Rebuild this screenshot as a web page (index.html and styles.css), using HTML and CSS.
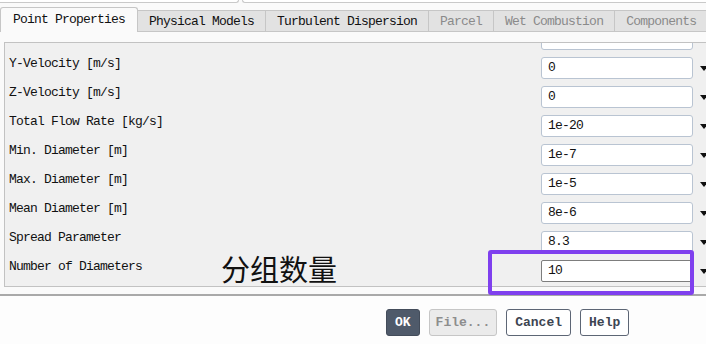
FILE: index.html
```html
<!DOCTYPE html>
<html lang="en">
<head>
    <meta charset="UTF-8">
    <meta name="viewport" content="width=device-width, initial-scale=1.0">
    <title>Point Properties</title>
    <link rel="stylesheet" href="styles.css">
</head>
<body>
    <div class="top-edge">
        <div class="edge-box edge-left"></div>
        <div class="edge-box edge-right"></div>
    </div>
    <div class="tabs">
        <div class="tab active">Point Properties</div>
        <div class="tab">Physical Models</div>
        <div class="tab">Turbulent Dispersion</div>
        <div class="tab off">Parcel</div>
        <div class="tab off">Wet Combustion</div>
        <div class="tab off">Components</div>
    </div>
    <div class="sheet">
        <div class="panel">
            <div class="rows">
                <!-- 上一行已滚出可视区，只露出输入框底边 -->
                <div class="row">
                    <span class="label"></span>
                    <span class="input"></span><span class="arrow"></span>
                </div>
                <div class="row">
                    <span class="label">Y-Velocity [m/s]</span>
                    <span class="input">0</span><span class="arrow"></span>
                </div>
                <div class="row">
                    <span class="label">Z-Velocity [m/s]</span>
                    <span class="input">0</span><span class="arrow"></span>
                </div>
                <div class="row">
                    <span class="label">Total Flow Rate [kg/s]</span>
                    <span class="input">1e-20</span><span class="arrow"></span>
                </div>
                <div class="row">
                    <span class="label">Min. Diameter [m]</span>
                    <span class="input">1e-7</span><span class="arrow"></span>
                </div>
                <div class="row">
                    <span class="label">Max. Diameter [m]</span>
                    <span class="input">1e-5</span><span class="arrow"></span>
                </div>
                <div class="row">
                    <span class="label">Mean Diameter [m]</span>
                    <span class="input">8e-6</span><span class="arrow"></span>
                </div>
                <div class="row">
                    <span class="label">Spread Parameter</span>
                    <span class="input">8.3</span><span class="arrow"></span>
                </div>
                <div class="row">
                    <span class="label">Number of Diameters</span>
                    <span class="input focus">10</span><span class="arrow"></span>
                </div>
            </div>
        </div>
    </div>
    <div class="actions">
        <button class="btn primary">OK</button>
        <button class="btn disabled">File...</button>
        <button class="btn">Cancel</button>
        <button class="btn">Help</button>
    </div>

    <!-- 标注 -->
    <div class="note">分组数量</div>
    <div class="mark"></div>
</body>
</html>
```

FILE: styles.css
```css
*{
    margin: 0;
    padding: 0;
    box-sizing: border-box;
}
body{
    width: 706px;
    height: 344px;
    overflow: hidden;
    position: relative;
    background-color: #fdfdfd;
    font-family: 'Liberation Mono', monospace;
    font-size: 13px;
    letter-spacing: -0.8px;
    color: #111;
}
.top-edge{
    display: flex;
    height: 7px;
    background-color: #fafafa;
}
.edge-box{
    height: 3px;
    background-color: #fff;
    border-bottom: 1px solid #c9c9c9;
}
.edge-left{
    width: 239px;
    border-right: 1px solid #c9c9c9;
    border-bottom-right-radius: 4px;
}
.edge-right{
    flex: 1;
    margin-left: 3px;
    border-left: 1px solid #c9c9c9;
    border-bottom-left-radius: 4px;
}
.tabs{
    display: flex;
    align-items: flex-end;
    height: 25px;
    background-color: #fafafa;
    border-bottom: 1px solid #c6c6c6;
}
.tab{
    flex-shrink: 0;
    height: 21px;
    line-height: 21px;
    padding: 0 11px;
    background-color: #e2e2e2;
    border-top: 1px solid #c6c6c6;
    border-right: 1px solid #c6c6c6;
    white-space: nowrap;
}
.tab.active{
    height: 25px;
    line-height: 24px;
    padding: 0 12px;
    margin-bottom: -1px;
    background-color: #fafafa;
    border-left: 1px solid #c6c6c6;
    border-top-left-radius: 3px;
    border-top-right-radius: 3px;
}
.tab.off{
    color: #8a8a8a;
}
.sheet{
    height: 264px;
    padding: 10px 0 0 4px;
    background-color: #fafafa;
    border-bottom: 2px solid #a9a9a9;
}
.panel{
    height: 245px;
    overflow: hidden;
    background-color: #f0f0f0;
    border: 1px solid #c2c2c2;
    border-right: none;
}
.rows{
    margin-top: -18px;
}
.row{
    display: flex;
    align-items: flex-start;
    height: 29px;
}
.label{
    width: 536px;
    flex-shrink: 0;
    padding: 2px 0 0 4px;
    line-height: 16px;
    white-space: nowrap;
}
.input{
    width: 152px;
    height: 22px;
    flex-shrink: 0;
    margin-top: 3px;
    padding-left: 6px;
    line-height: 20px;
    background-color: #fff;
    border: 1px solid #b9c4d2;
    border-radius: 3px;
}
.input.focus{
    border-color: #7d7d7d;
    border-radius: 2px;
}
.arrow{
    flex-shrink: 0;
    width: 0;
    height: 0;
    margin: 12px 0 0 7px;
    border-left: 4px solid transparent;
    border-right: 4px solid transparent;
    border-top: 5px solid #111;
}
.actions{
    display: flex;
    gap: 9px;
    padding: 13px 0 0 386px;
}
.btn{
    height: 27px;
    padding: 0 8px;
    font-family: 'Liberation Mono', monospace;
    font-size: 13px;
    font-weight: bold;
    letter-spacing: 0;
    color: #3d4552;
    background-color: #fff;
    border: 1px solid #5d6675;
    border-radius: 3px;
}
.btn.primary{
    color: #fff;
    background-color: #4f5a6a;
    border-color: #434c5a;
}
.btn.disabled{
    padding: 0 6px;
    color: #8d8d8d;
    background-color: #ebebeb;
    border-color: #c6c6c6;
}
.note{
    position: absolute;
    left: 221px;
    top: 253px;
    font-family: 'Noto Sans CJK SC', sans-serif;
    font-size: 29px;
    line-height: 31px;
    letter-spacing: 0;
    color: #111;
}
.mark{
    position: absolute;
    left: 488px;
    top: 250px;
    width: 206px;
    height: 45px;
    border: 4px solid #7f40ee;
    border-radius: 3px;
}
```
